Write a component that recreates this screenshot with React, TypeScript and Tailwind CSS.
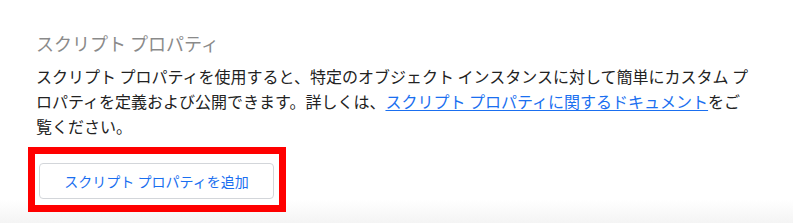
export default function App() {
  return (
    <div
      className="h-[223px] w-[793px] overflow-hidden bg-[linear-gradient(to_bottom,#ffffff_200px,#f4f4f4_223px)] px-9 pt-[30px]"
      style={{ fontFamily: '"Noto Sans CJK JP", "Noto Sans", sans-serif' }}
    >
      <h2 className="text-[18px] leading-[26px] font-normal text-[#8a8a8a]">
        スクリプト プロパティ
      </h2>
      <p className="mt-[8px] w-[745px] text-[16px] leading-[25px] text-[#222]">
        スクリプト プロパティを使用すると、特定のオブジェクト インスタンスに対して簡単にカスタム プ
        <br />
        ロパティを定義および公開できます。詳しくは、
        <a href="#" className="text-[#1a6ff0] underline underline-offset-2">
          スクリプト プロパティに関するドキュメント
        </a>
        をご
        <br />
        覧ください。
      </p>
      <div className="-ml-2 mt-[8px] h-[65px] w-[258px] border-[7px] border-[#ff0000] bg-white pl-1 pt-[9px]">
        <button className="flex h-[36px] w-[235px] items-center justify-center rounded-[4px] border border-[#d3d6da] bg-white text-[14px] text-[#1a6ff0]">
          スクリプト プロパティを追加
        </button>
      </div>
    </div>
  );
}
